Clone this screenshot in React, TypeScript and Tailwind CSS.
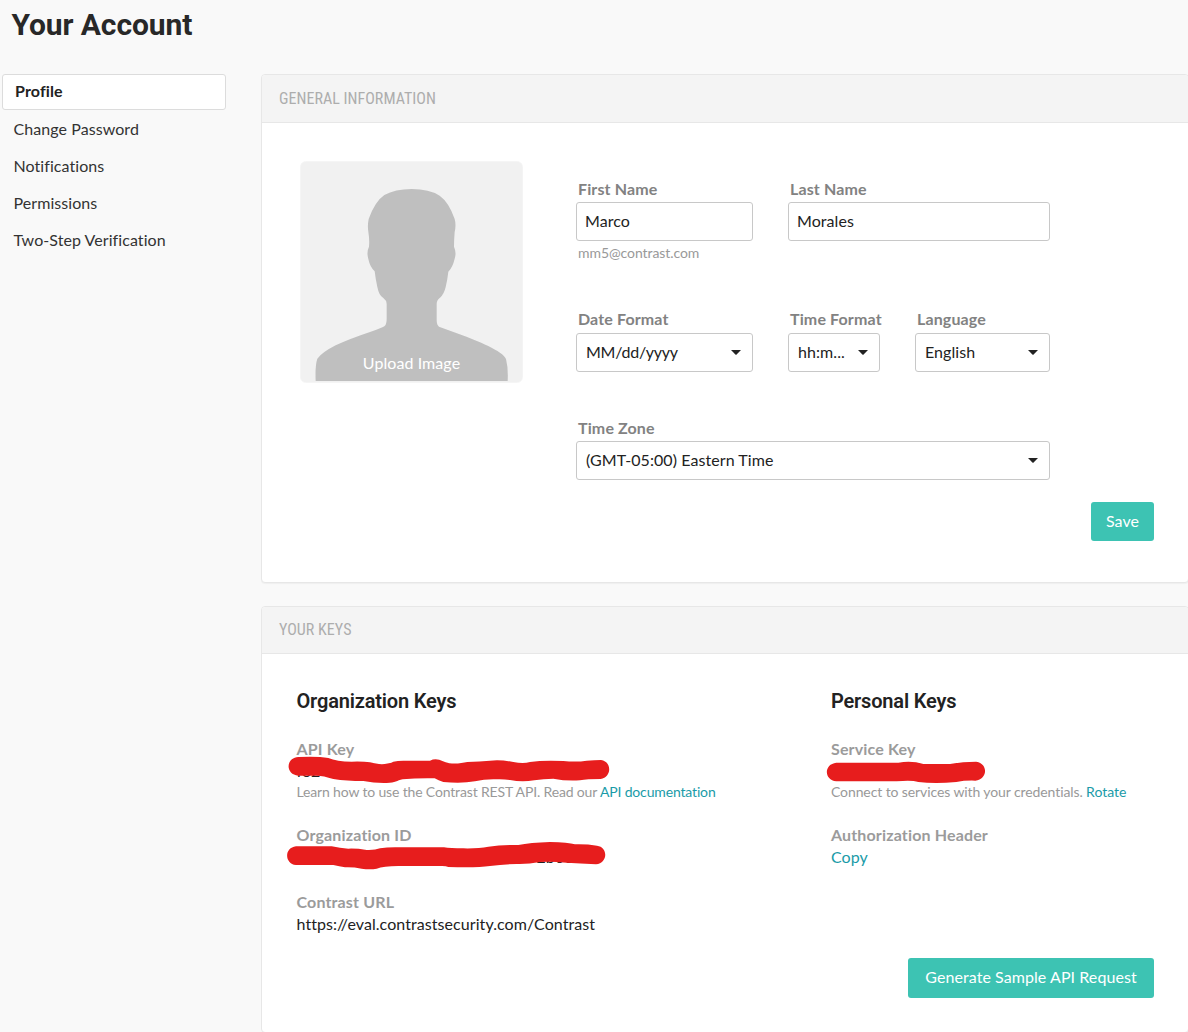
import type { ReactNode } from "react";

const navItems = ["Change Password", "Notifications", "Permissions", "Two-Step Verification"];

function Caret() {
  return (
    <svg className="h-[5px] w-[10px] shrink-0" viewBox="0 0 10 5" fill="#222">
      <path d="M0 0H10L5.6 4.6Q5 5.1 4.4 4.6Z" />
    </svg>
  );
}

function Label({ children }: { children: ReactNode }) {
  return <div className="h-6 pl-[2px] font-bold leading-6 tracking-[0.13px] whitespace-nowrap text-[#828282]">{children}</div>;
}

function Field({ label, value, className }: { label: string; value: string; className: string }) {
  return (
    <div className={className}>
      <Label>{label}</Label>
      <div className="mt-px flex h-[39px] items-center rounded-[3px] border border-[#c8c8c8] bg-white pb-[2px] pl-[8px] text-[#222]">{value}</div>
    </div>
  );
}

function SelectField({ label, value, className, boxClass = "mt-[2px]" }: { label: string; value: string; className: string; boxClass?: string }) {
  return (
    <div className={className}>
      <Label>{label}</Label>
      <div className={`flex h-[39px] items-center justify-between rounded-[3px] border border-[#c8c8c8] bg-white pr-[11.5px] pl-[9px] whitespace-nowrap text-[#222] ${boxClass}`}>
        <span className="pb-[2px]">{value}</span>
        <Caret />
      </div>
    </div>
  );
}

function CardHeader({ children, className }: { children: ReactNode; className: string }) {
  return (
    <div className={`flex items-center border-b border-[#e7e7e7] bg-[#f4f4f4] pl-[17px] ${className}`}>
      <h2 className="font-['Roboto_Condensed',Roboto,sans-serif] text-base leading-6 tracking-[0.03px] whitespace-nowrap text-[#adadad]">{children}</h2>
    </div>
  );
}

function KeyLabel({ children }: { children: ReactNode }) {
  return <div className="h-6 leading-6 font-bold tracking-[0.15px] text-[#9b9b9b]">{children}</div>;
}

function KeysHeading({ children }: { children: ReactNode }) {
  return (
    <h3 className="h-[49px] font-[Roboto,sans-serif] text-xl leading-[26px] font-semibold tracking-[-0.18px] text-[#222]">{children}</h3>
  );
}

export default function App() {
  return (
    <div className="h-[1032px] w-[1188px] overflow-hidden bg-[#f9f9f9] font-[Lato,sans-serif] text-base tracking-[0.07px] text-[#333] [font-variant-ligatures:none]">
      <h1 className="h-[74px] pt-[7px] pl-[11.5px] font-[Roboto,sans-serif] text-[30px] leading-9 font-bold tracking-[-0.1px] text-[#282828]">
        Your Account
      </h1>
      <div className="flex">
        <nav className="ml-[2px] w-[224px] shrink-0">
          <div className="mb-px flex h-9 items-center rounded-[3px] border border-[#dcdcdc] bg-white pb-[2px] pl-[12px] font-bold tracking-[0.13px] text-[#222]">Profile</div>
          {navItems.map((item) => (
            <div key={item} className="flex h-[37px] items-center pb-[2px] pl-[11.5px]">{item}</div>
          ))}
        </nav>

        <main className="ml-[35px] w-[928px] shrink-0">
          <section className="h-[509px] overflow-hidden rounded-[4px] border border-[#e7e7e7] bg-white shadow-[0_1px_1px_rgba(0,0,0,0.04)]">
            <CardHeader className="h-12">GENERAL INFORMATION</CardHeader>
            <div className="flex pt-[38px] pl-[38px]">
              <div className="relative h-[222px] w-[223px] shrink-0">
                <svg className="block h-full w-full" viewBox="30 33 669 666">
                  <rect x="32" y="35" width="665" height="662" rx="15" fill="#f1f1f1" stroke="#f3f3f3" strokeWidth="3" />
                  <path
                    fill="#bfbfbf"
                    d="M77 693Q75 646 82 626Q96 607 137 586Q180 566 240 546Q278 533 284 528Q290 522 290 506V462Q289 450 280 444Q267 437 262 411Q257 389 254 364Q240 351 235 327Q229 306 237 290Q239 270 235 245Q232 227 236 207Q255 154 283 135Q315 117 365 117Q418 117 449 137Q477 157 494 207Q499 225 494 246Q492 270 492 290Q500 308 494 326Q488 352 475 365Q472 391 467 411Q462 433 450 443Q440 450 440 462V510Q440 525 447 530L509 553C561 572 640 604 648 627Q655 654 653 693Z"
                  />
                </svg>
                <div className="absolute inset-x-0 top-[190px] text-center leading-6 text-white">Upload Image</div>
              </div>
              <div className="ml-[53px] w-[474px] pt-4">
                <div className="flex h-[130px]">
                  <div className="w-[177px]">
                    <Field label="First Name" value="Marco" className="w-[177px]" />
                    <div className="pt-[2px] pl-[2px] text-sm leading-5 tracking-[-0.07px] text-[#999]">mm5@contrast.com</div>
                  </div>
                  <Field label="Last Name" value="Morales" className="ml-[35px] w-[262px]" />
                </div>
                <div className="flex h-[109px]">
                  <SelectField label="Date Format" value="MM/dd/yyyy" className="w-[177px] [&_span]:tracking-[-0.25px]" />
                  <SelectField label="Time Format" value="hh:m..." className="ml-[35px] w-[92px]" />
                  <SelectField label="Language" value="English" className="ml-[35px] w-[135px]" />
                </div>
                <SelectField label="Time Zone" value="(GMT-05:00) Eastern Time" className="w-[474px]" boxClass="mt-px" />
              </div>
            </div>
            <div className="mt-[22px] flex justify-end pr-[34px]">
              <button className="h-[39px] w-[63px] rounded-[3px] bg-[#3dc3b3] pb-[2px] text-white">Save</button>
            </div>
          </section>

          <section className="mt-[23px] h-[427px] overflow-hidden rounded-[4px] border border-[#e7e7e7] bg-white">
            <CardHeader className="h-[47px]">YOUR KEYS</CardHeader>
            <div className="flex h-[304px] pt-[34px] pl-[34.5px]">
              <div className="w-[534.5px]">
                <KeysHeading>Organization Keys</KeysHeading>
                <KeyLabel>API Key</KeyLabel>
                <div className="relative h-[19px] leading-[19px] text-[#222]">
                  fo2
                  <svg className="absolute -top-[26px] -left-[16.5px] h-[70px] w-[340px]" viewBox="0 0 1020 210">
                    <path
                      fill="#e71d1d"
                      d="M55 66Q112 63 145 69Q170 80 215 80Q250 79 270 82C295 89 320 90 340 80Q352 77 370 77H450Q468 68 489 79C510 89 540 86 562 81Q600 80 630 77Q665 74 700 81Q730 87 750 81Q790 75 850 78Q890 82 920 77Q945 75 963 75C997 80 995 127 962 132Q920 132 900 136Q860 139 820 131Q790 131 763 136Q725 142 690 135Q670 132 648 133Q615 132 585 139Q545 146 490 141Q475 136 464 130Q410 129 368 133C350 137 347 143 320 144Q285 145 250 138Q200 138 160 132Q130 122 110 122H55C16 120 16 68 55 66Z"
                    />
                  </svg>
                </div>
                <p className="h-[43px] text-sm leading-6 tracking-[-0.155px] text-[#999]">
                  Learn how to use the Contrast REST API. Read our <a className="text-[#1a9ba8]">API documentation</a>
                </p>
                <KeyLabel>Organization ID</KeyLabel>
                <div className="relative h-[43px] pl-[240px] leading-[19px] text-[#222]">
                  2b00
                  <svg className="absolute -top-[27px] -left-[16.5px] h-[80px] w-[340px]" viewBox="0 0 1020 240">
                    <path
                      fill="#e71d1d"
                      d="M48 79H155Q180 84 205 86Q230 85 260 90Q285 91 300 85Q320 82 345 82H492Q510 85 550 85Q595 86 625 80Q665 74 715 75Q750 68 810 66Q865 67 885 73Q920 72 951 77C985 81 984 130 948 133Q900 130 860 128Q810 123 780 126Q745 133 710 132Q670 132 630 138Q590 144 505 141Q497 137 480 138H355Q310 139 290 146Q270 149 245 146Q220 141 195 142Q178 139 160 135H48C12 130 13 83 48 79Z"
                    />
                  </svg>
                </div>
                <KeyLabel>Contrast URL</KeyLabel>
                <div className="leading-5 text-[#222]">https://eval.contrastsecurity.com/Contrast</div>
              </div>
              <div className="w-[340px]">
                <KeysHeading>Personal Keys</KeysHeading>
                <KeyLabel>Service Key</KeyLabel>
                <div className="relative h-[19px]">
                  <svg className="absolute -top-[1px] -left-[6px] h-[24px] w-[162px]" viewBox="30 240 486 72">
                    <path
                      fill="#e71d1d"
                      d="M64 248H250Q290 241 325 252H405Q445 245 483 245C520 250 519 298 481 302Q450 301 424 306Q360 312 310 306Q290 299 245 304H64C26 300 26 252 64 248Z"
                    />
                  </svg>
                </div>
                <p className="h-[43px] text-sm leading-6 tracking-[-0.1px] whitespace-nowrap text-[#999]">
                  Connect to services with your credentials. <a className="tracking-[0px] text-[#1a9ba8]">Rotate</a>
                </p>
                <KeyLabel>Authorization Header</KeyLabel>
                <a className="block leading-5 text-[#1a9ba8]">Copy</a>
              </div>
            </div>
            <div className="flex justify-end pr-[34px]">
              <button className="h-10 w-[246px] rounded-[3px] bg-[#3dc3b3] pb-[2px] text-white">Generate Sample API Request</button>
            </div>
          </section>
        </main>
      </div>
    </div>
  );
}
